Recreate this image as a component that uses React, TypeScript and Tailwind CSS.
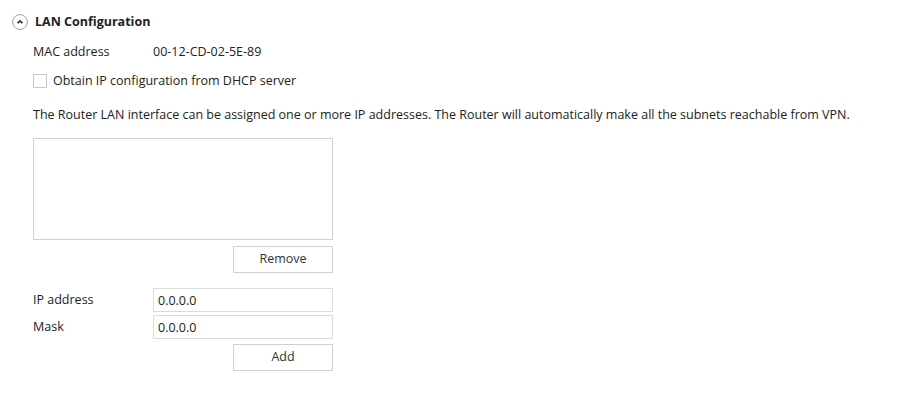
const font = { fontFamily: '"Open Sans", "Noto Sans", sans-serif' };

function Field({ label, value }: { label: string; value: string }) {
  return (
    <div className="flex items-center h-[24px]">
      <span className="w-[120px]">{label}</span>
      <input
        readOnly
        value={value}
        className="w-[180px] h-[24px] border border-[#dcdcdc] px-[4px] text-[12.5px] text-[#222] outline-none"
        style={font}
      />
    </div>
  );
}

export default function App() {
  return (
    <div
      className="w-[911px] h-[399px] bg-white text-[12.5px] text-[#222] pt-[14px]"
      style={font}
    >
      <div className="flex items-center pl-[12px] gap-[7px] h-[16px]">
        <svg width="16" height="16" viewBox="0 0 16 16" className="shrink-0 block">
          <circle cx="8" cy="8" r="7.4" fill="none" stroke="#a0a0a0" strokeWidth="1" />
          <path d="M5.6 9.2 L8 6.9 L10.4 9.2" fill="none" stroke="#333" strokeWidth="1.8" />
        </svg>
        <span className="font-bold">LAN Configuration</span>
      </div>

      <div className="pl-[33px]">
        <div className="flex items-center mt-[13px] h-[18px]">
          <span className="w-[120px]">MAC address</span>
          <span>00-12-CD-02-5E-89</span>
        </div>

        <label className="flex items-center mt-[12px] h-[16px] gap-[6px]">
          <span className="w-[14px] h-[14px] border border-[#c8c8c8] bg-white" />
          <span>Obtain IP configuration from DHCP server</span>
        </label>

        <p className="mt-[18px] h-[16px] leading-[16px] whitespace-nowrap">
          The Router LAN interface can be assigned one or more IP addresses. The Router will automatically make all the subnets reachable from VPN.
        </p>

        <div className="mt-[15px] w-[300px] h-[102px] border border-[#d0d0d0]" />

        <div className="flex justify-end w-[300px] mt-[6px]">
          <button className="w-[100px] h-[27px] border border-[#d0d0d0] bg-white text-[#333]">
            Remove
          </button>
        </div>

        <div className="mt-[15px] flex flex-col gap-[3px]">
          <Field label="IP address" value="0.0.0.0" />
          <Field label="Mask" value="0.0.0.0" />
        </div>

        <div className="flex justify-end w-[300px] mt-[5px]">
          <button className="w-[100px] h-[27px] border border-[#d0d0d0] bg-white text-[#333]">
            Add
          </button>
        </div>
      </div>
    </div>
  );
}
